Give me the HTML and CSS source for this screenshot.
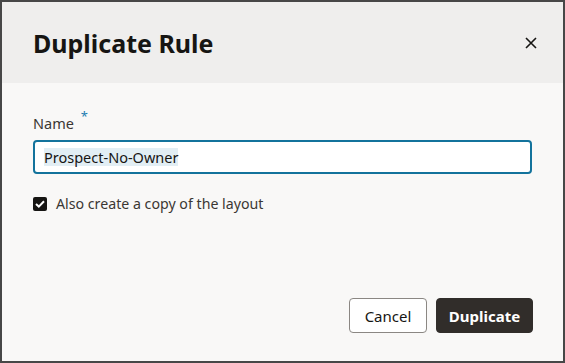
FILE: index.html
```html
<!DOCTYPE html>
<html lang="en">
<head>
    <meta charset="UTF-8">
    <title>Duplicate Rule</title>
    <link rel="stylesheet" href="styles.css">
</head>
<body>
    <div class="dialog">
        <div class="dialog-header">
            <h1 class="dialog-title">Duplicate Rule</h1>
            <button class="close-button" aria-label="Close">
                <svg width="12" height="12" viewBox="0 0 12 12"><path d="M1 1 L11 11 M11 1 L1 11" stroke="#161513" stroke-width="1.6" fill="none"/></svg>
            </button>
        </div>
        <div class="dialog-body">
            <label class="field-label">Name <span class="required">*</span></label>
            <div class="text-input"><span class="selected">Prospect-No-Owner</span></div>
            <label class="check-row">
                <span class="checkbox">
                    <svg width="10" height="8" viewBox="0 0 10 8"><path d="M1 4 L3.8 6.6 L9 1.2" stroke="#fff" stroke-width="2" fill="none"/></svg>
                </span>
                Also create a copy of the layout
            </label>
        </div>
        <div class="dialog-footer">
            <button class="btn btn-outline">Cancel</button>
            <button class="btn btn-solid">Duplicate</button>
        </div>
    </div>
</body>
</html>
```
FILE: styles.css
```css
/* --- Base --- */
:root {
    --frame-color: #474747;
    --header-bg: #efeeed;
    --body-bg: #f9f8f7;
    --text-color: #161513;
    --label-color: #3b3733;
    --accent-color: #13739c;
    --font-main: 'Noto Sans', 'Open Sans', sans-serif;
}
html, body {
    margin: 0;
    height: 100%;
}
body {
    background-color: var(--frame-color);
    font-family: var(--font-main);
    color: var(--text-color);
}

/* --- Dialog --- */
.dialog {
    box-sizing: border-box;
    height: 100%;
    border: 2px solid var(--frame-color);
    background-color: var(--body-bg);
    display: flex;
    flex-direction: column;
}
.dialog-header {
    height: 81px;
    background-color: var(--header-bg);
    display: flex;
    align-items: center;
    justify-content: space-between;
    padding: 0 26px 0 31px;
}
.dialog-title {
    margin: 0;
    font-size: 25px;
    font-weight: 700;
    line-height: 28px;
}
.close-button {
    background: none;
    border: none;
    padding: 0;
    width: 12px;
    height: 12px;
    display: flex;
    cursor: pointer;
}

/* --- Form --- */
.dialog-body {
    flex: 1;
    padding: 30px 31px 0;
}
.field-label {
    display: block;
    font-size: 14.5px;
    line-height: 20px;
    color: var(--label-color);
    margin-bottom: 6px;
}
.field-label .required {
    color: #227cb1;
    font-size: 13px;
    position: relative;
    top: -8px;
    margin-left: 3px;
}
.text-input {
    height: 30px;
    border: 2px solid var(--accent-color);
    border-radius: 4px;
    background-color: #fff;
    padding: 0 9px;
    display: flex;
    align-items: center;
    font-size: 14.5px;
}
.text-input .selected {
    background-color: #e2eef4;
    line-height: 18px;
}
.check-row {
    display: flex;
    align-items: center;
    gap: 9px;
    margin-top: 20px;
    font-size: 14.2px;
    line-height: 20px;
    color: var(--label-color);
}
.checkbox {
    width: 14px;
    height: 14px;
    border-radius: 2px;
    background-color: var(--text-color);
    display: flex;
    align-items: center;
    justify-content: center;
}

/* --- Footer --- */
.dialog-footer {
    display: flex;
    justify-content: flex-end;
    gap: 9px;
    padding: 0 30px 28px;
}
.btn {
    height: 35px;
    font-family: var(--font-main);
    font-size: 15px;
    border-radius: 4px;
    cursor: pointer;
}
.btn-outline {
    width: 78px;
    background-color: #fff;
    border: 1px solid #8b8783;
    color: var(--text-color);
}
.btn-solid {
    width: 97px;
    background-color: #312d2a;
    border: 1px solid #312d2a;
    color: #fff;
    font-weight: 700;
}
```
